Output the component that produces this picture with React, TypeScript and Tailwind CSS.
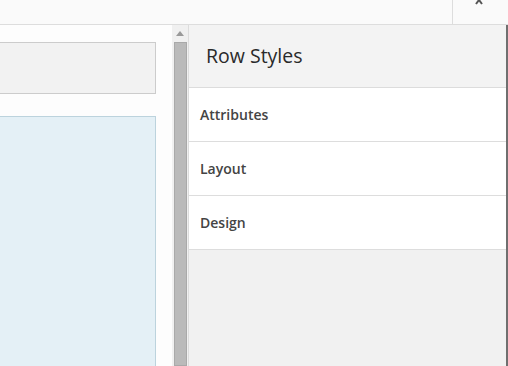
export default function App() {
  const items = ["Attributes", "Layout", "Design"];

  return (
    <div
      className="w-[508px] h-[366px] overflow-hidden flex flex-col bg-white text-[#333]"
      style={{ fontFamily: '"Open Sans", "Liberation Sans", sans-serif' }}
    >
      {/* top bar */}
      <div className="h-[25px] flex border-b border-[#dddddd] bg-[#fafafa] shrink-0">
        <div className="flex-1" />
        <div className="w-[56px] border-l border-[#dddddd] flex justify-center">
          <svg width="8" height="10" viewBox="0 0 8 10" className="-mt-[5px] ml-[-3px]">
            <path d="M1 1 L7 9 M7 1 L1 9" stroke="#555" strokeWidth="2" />
          </svg>
        </div>
      </div>

      <div className="flex flex-1 min-h-0">
        {/* canvas */}
        <div className="w-[172px] bg-[#fdfdfd] pt-[17px] flex flex-col">
          <div className="w-[156px] h-[52px] border border-l-0 border-[#cccccc] bg-[#f2f2f2]" />
          <div className="w-[156px] flex-1 mt-[22px] border border-l-0 border-b-0 border-[#bcd3dd] bg-[#e4f0f6]" />
        </div>

        {/* scrollbar */}
        <div className="w-[16px] bg-[#f0f0f0] flex flex-col items-center">
          <svg width="8" height="5" viewBox="0 0 8 5" className="mt-[6px]">
            <path d="M0 5 L4 0 L8 5 Z" fill="#999" />
          </svg>
          <div className="w-[13px] flex-1 mt-[6px] bg-[#bababa] border border-[#a9a9a9]" />
        </div>

        {/* row styles panel */}
        <div className="flex-1 flex flex-col border-l border-[#dcdcdc] border-r-2 border-r-[#6f6f6f] bg-[#f1f1f1]">
          <div className="h-[63px] flex items-center pl-[17px] border-b border-[#dcdcdc] bg-[#f3f3f3] text-[19.5px] font-medium text-[#2a2a2a]">
            Row Styles
          </div>
          {items.map((it) => (
            <div
              key={it}
              className="h-[54px] flex items-center pl-[11px] border-b border-[#dddddd] bg-white text-[14px] font-semibold text-[#444]"
            >
              {it}
            </div>
          ))}
        </div>
      </div>
    </div>
  );
}
